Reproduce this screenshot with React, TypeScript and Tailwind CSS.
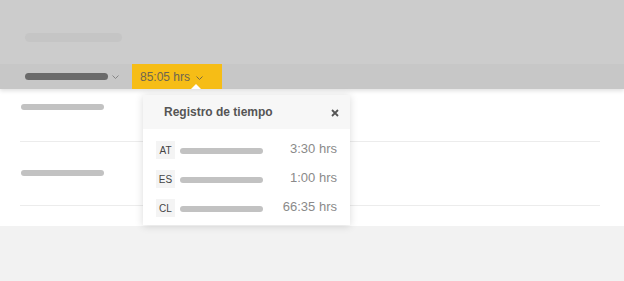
import React from 'react'

const ROWS = [
  { id: 'AT', time: '3:30 hrs' },
  { id: 'ES', time: '1:00 hrs' },
  { id: 'CL', time: '66:35 hrs' },
]

function Chevron({ className }: { className?: string }) {
  return (
    <svg width="7" height="4" viewBox="0 0 7 4" className={className} fill="none">
      <path d="M0.5 0.5 L3.5 3.5 L6.5 0.5" stroke="currentColor" strokeWidth="1" />
    </svg>
  )
}

export default function App() {
  return (
    <div className="relative w-[624px] h-[281px] bg-[#f2f2f2] font-['Liberation_Sans',Arial,sans-serif] overflow-hidden">
      {/* header */}
      <header className="relative z-10 shadow-[0_2px_4px_rgba(0,0,0,0.12)]">
        <div className="h-[64px] bg-[#cccccc] pt-[33px] pl-[25px]">
          <div className="w-[97px] h-[9px] rounded-full bg-[#c5c5c5]" />
        </div>
        <div className="h-[25px] bg-[#c7c7c7] flex items-stretch pl-[25px]">
          <div className="flex items-center">
            <div className="w-[83px] h-[7px] rounded-full bg-[#6a6a6a]" />
            <Chevron className="ml-[4px] mt-[1px] text-[#858585]" />
          </div>
          <button className="relative ml-[13px] w-[90px] bg-[#f6bd16] flex items-center pl-[8px] text-[12px] text-[#6e6650]">
            85:05 hrs
            <Chevron className="ml-[6px] mt-[2px] text-[#7a6a40]" />
            <span className="absolute bottom-0 left-[59px] w-0 h-0 border-l-[5px] border-r-[5px] border-b-[5px] border-l-transparent border-r-transparent border-b-white" />
          </button>
        </div>
      </header>

      {/* content */}
      <main className="bg-white h-[137px] pl-[20px] pr-[24px]">
        <div className="h-[53px] pt-[15px] pl-[1px] border-b border-[#ececec]">
          <div className="w-[83px] h-[6px] rounded-full bg-[#c2c2c2]" />
        </div>
        <div className="h-[64px] pt-[28px] pl-[1px] border-b border-[#ececec]">
          <div className="w-[83px] h-[6px] rounded-full bg-[#c2c2c2]" />
        </div>
      </main>

      {/* popover */}
      <div className="absolute z-20 left-[143px] top-[95px] w-[207px] bg-white shadow-[0_1px_8px_rgba(0,0,0,0.15)]">
        <div className="h-[34px] bg-[#f7f7f7] flex items-center justify-between pl-[21px] pr-[11px]">
          <span className="text-[12px] font-bold text-[#555555]">Registro de tiempo</span>
          <svg width="8" height="8" viewBox="0 0 8 8" className="mt-[1px]">
            <path d="M1 1 L7 7 M7 1 L1 7" stroke="#555555" strokeWidth="1.8" />
          </svg>
        </div>
        <div className="pt-[12px] pb-[8px] pl-[13px] pr-[13px] flex flex-col gap-[11px]">
          {ROWS.map((row) => (
            <div key={row.id} className="flex items-center h-[18px]">
              <span className="w-[19px] h-[18px] bg-[#f4f4f4] text-[10px] text-[#444] flex items-center justify-center">
                {row.id}
              </span>
              <div className="ml-[5px] mt-[1px] w-[83px] h-[6px] rounded-full bg-[#c2c2c2]" />
              <span className="ml-auto mt-[-2px] text-[13px] text-[#8a8a8a]">{row.time}</span>
            </div>
          ))}
        </div>
      </div>
    </div>
  )
}
